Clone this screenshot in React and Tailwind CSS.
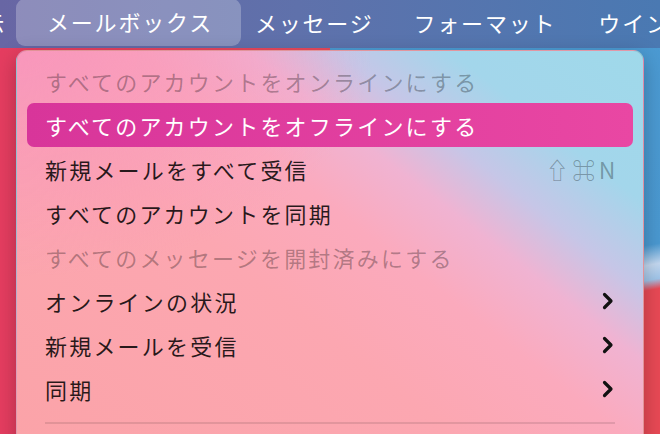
import React from 'react';

const items = [
  { label: 'すべてのアカウントをオンラインにする', disabled: true },
  { label: 'すべてのアカウントをオフラインにする', active: true },
  { label: '新規メールをすべて受信', shortcut: '⇧⌘N' },
  { label: 'すべてのアカウントを同期' },
  { label: 'すべてのメッセージを開封済みにする', disabled: true },
  { label: 'オンラインの状況', submenu: true },
  { label: '新規メールを受信', submenu: true },
  { label: '同期', submenu: true },
];

function Chevron() {
  return (
    <svg width="12" height="18" viewBox="0 0 12 18" fill="none" stroke="#111" strokeWidth="3.2" strokeLinecap="round" strokeLinejoin="round">
      <path d="M2.5 2.5l6.5 6.5-6.5 6.5" />
    </svg>
  );
}

export default function App() {
  return (
    <div
      className="relative w-[660px] h-[434px] overflow-hidden flex flex-col"
      style={{ fontFamily: '"Noto Sans CJK JP", "Noto Sans", sans-serif' }}
    >
      {/* menu bar */}
      <div className="h-[48px] shrink-0 flex items-center pb-[3px] bg-[linear-gradient(90deg,#6866a4,#5f71ab_45%,#4a79b2)] text-white text-[22px] tracking-[1.8px] whitespace-nowrap">
        <div className="shrink-0 w-[16px] overflow-hidden flex justify-end">
          <span className="shrink-0 pr-[10px]">表示</span>
        </div>
        <div className="shrink-0 h-[47px] -mt-[1px] self-start flex items-center pb-[2px] pl-[31px] pr-[28px] rounded-[9px] bg-white/25">メールボックス</div>
        <span className="shrink-0 ml-[14px]">メッセージ</span>
        <span className="shrink-0 ml-[40px]">フォーマット</span>
        <span className="shrink-0 ml-[42px]">ウインドウ</span>
      </div>

      {/* desktop */}
      <div className="flex-1 bg-[linear-gradient(90deg,#e53d60_0%,#e84a5c_50%,transparent_50%),linear-gradient(170deg,#4c9bd3_0%,#4a98d0_62%,#c3d7ef_66%,#9fc4e8_69%,#e84955_71%,#e84955_100%)]" />

      {/* dropdown */}
      <div className="absolute left-[16px] top-[50px] w-[628px] h-[400px] rounded-[11px] border border-black/10 shadow-[0_6px_20px_rgba(0,0,0,0.25)] overflow-hidden bg-[radial-gradient(ellipse_at_0%_0%,rgba(248,150,188,0.95),transparent_40%),linear-gradient(218deg,#9fd9ea_0%,#a3d6eb_17%,#c6c6e7_27%,#f0b3d2_35%,#fbaabd_45%,#fca7b1_60%,#fba3a8_100%)] px-[10px] pt-[8px]">
        {items.map((it) => (
          <div
            key={it.label}
            className={`h-[44px] flex items-center justify-between pl-[18px] rounded-[7px] text-[22px] tracking-[2.2px] whitespace-nowrap ${
              it.active
                ? 'bg-[linear-gradient(90deg,#d8359a,#e947a3)] text-white'
                : it.disabled
                ? 'text-black/30'
                : 'text-black/85'
            } ${it.shortcut ? 'pr-[14px]' : 'pr-[19px]'}`}
          >
            <span>{it.label}</span>
            {it.shortcut && <span className="text-[23px] text-black/30 tracking-[3.5px]">{it.shortcut}</span>}
            {it.submenu && <Chevron />}
          </div>
        ))}
        <div className="mx-[18px] mt-[11px] h-[2px] bg-black/10" />
      </div>
    </div>
  );
}
